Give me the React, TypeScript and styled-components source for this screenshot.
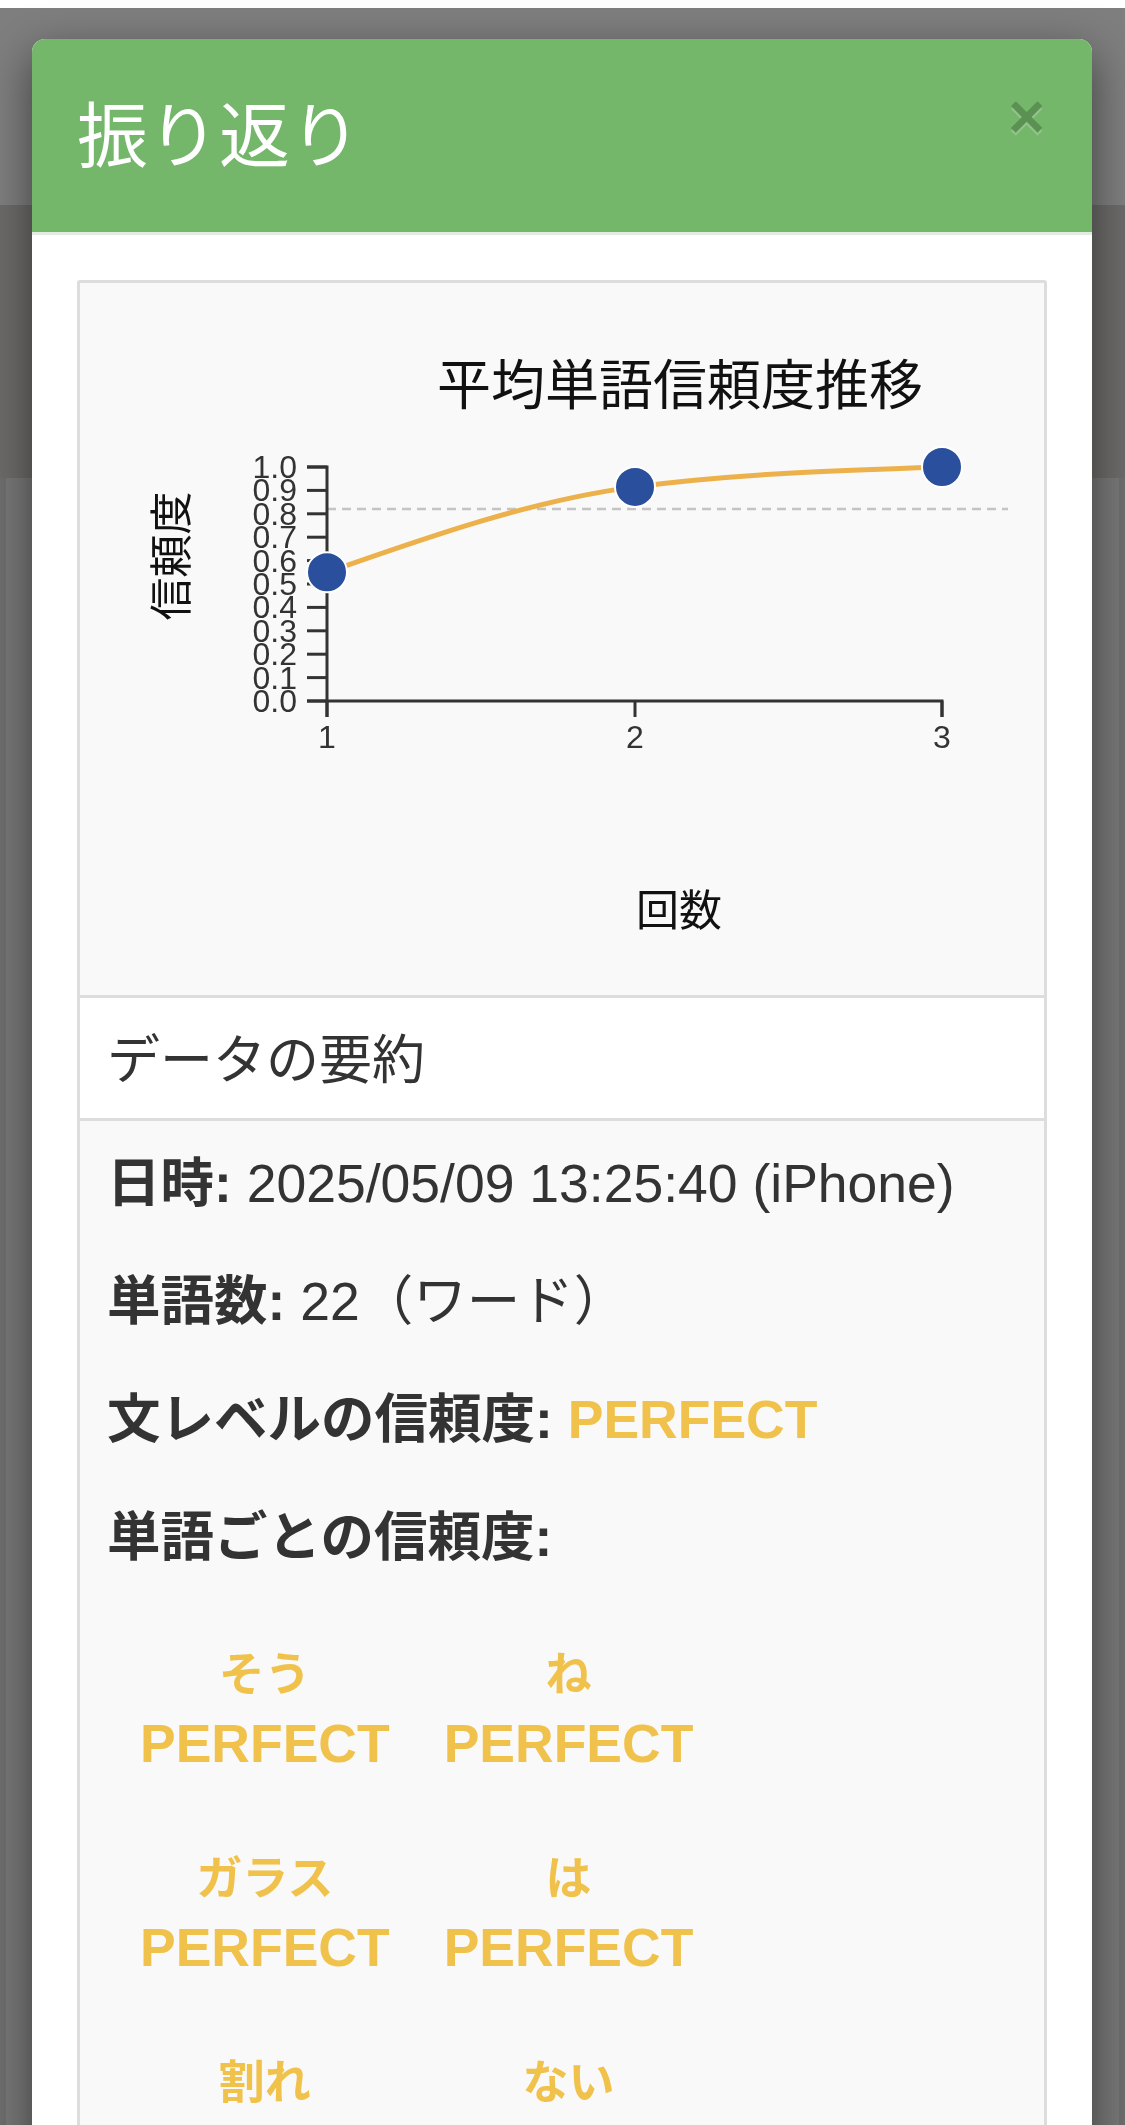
import React from 'react'
import styled, { createGlobalStyle } from 'styled-components'

const GlobalStyle = createGlobalStyle`
  html, body {
    margin: 0;
    padding: 0;
    background: #fff;
    font-family: "Liberation Sans", "Noto Sans CJK JP", sans-serif;
  }
`

// page lying under the dialog backdrop
const Page = styled.div`
  height: 100vh;
  overflow: hidden;
  display: flex;
  flex-direction: column;
  background: #dcdcdc;
`
const StatusGap = styled.div`
  height: 8px;
  background: #fff;
`
const NavBar = styled.div`
  height: 197px;
  background: #fcfcfc;
`
const Band = styled.div`
  height: 273px;
  background: #d8d6d4;
`
const PageContent = styled.div`
  flex: 1;
  padding: 0 6px;
  display: flex;
`
const PageCard = styled.div`
  flex: 1;
  background: #f0f0f0;
`
const Backdrop = styled.div`
  position: fixed;
  top: 8px;
  left: 0;
  right: 0;
  bottom: 0;
  background: rgba(0, 0, 0, 0.5);
`
const ModalLayer = styled.div`
  position: fixed;
  inset: 0;
  overflow: hidden;
  padding: 39px 33px 0 32px;
`
const Dialog = styled.div`
  background: #fff;
  border-radius: 13px 13px 0 0;
  box-shadow: 0 15px 45px rgba(0, 0, 0, 0.5);
  min-height: 100%;
`
const Header = styled.div`
  height: 193px;
  display: flex;
  align-items: center;
  justify-content: space-between;
  padding: 0 47px 0 45px;
  background: #74b66a;
  border-radius: 13px 13px 0 0;
  border-bottom: 3px solid #e4ebe2;
`
const Title = styled.h4`
  margin: 0 0 10px;
  font-family: "Noto Sans CJK JP", sans-serif;
  font-weight: 400;
  font-size: 71px;
  line-height: 1;
  color: #fff;
`
const CloseButton = styled.button`
  align-self: flex-start;
  margin-top: 46px;
  padding: 0;
  border: 0;
  background: none;
  font-family: "Liberation Sans", sans-serif;
  font-size: 63px;
  font-weight: 700;
  line-height: 1;
  color: #000;
  opacity: 0.2;
  text-shadow: 0 3px 0 #fff;
  cursor: pointer;
`
const Body = styled.div`
  padding: 45px;
`
const Panel = styled.div`
  border: 3px solid #ddd;
  border-radius: 3px 3px 0 0;
  background: #f9f9f9;
`
const ChartArea = styled.div`
  height: 712px;
  border-bottom: 3px solid #ddd;
  svg {
    display: block;
  }
`
const ChartTitle = styled.text`
  font-family: "Noto Sans CJK JP", sans-serif;
  font-size: 54px;
  fill: #111;
`
const AxisTitle = styled.text`
  font-family: "Noto Sans CJK JP", sans-serif;
  font-size: 43px;
  fill: #111;
`
const TickText = styled.text`
  font-family: "Liberation Sans", sans-serif;
  font-size: 32px;
  fill: #333;
`
const PanelHeading = styled.div`
  height: 116px;
  display: flex;
  align-items: center;
  padding: 0 0 4px 27px;
  background: #fff;
  border-bottom: 3px solid #ddd;
  font-family: "Noto Sans CJK JP", sans-serif;
  font-size: 53px;
  color: #333;
`
const PanelBody = styled.div`
  padding: 27px 27px 0;
  color: #333;
  font-size: 53.5px;
`
const Row = styled.p`
  margin: 0 0 46px;
  line-height: 72px;
  white-space: nowrap;
`
const Label = styled.strong`
  font-weight: 700;
`
const Level = styled.span`
  font-weight: 700;
  color: #f0c24b;
`
const WordGrid = styled.div`
  display: grid;
  grid-template-columns: repeat(2, max-content);
  margin-left: 6px;
`
const WordItem = styled.div`
  padding: 20px 27px 44px;
  text-align: center;
  color: #f0c24b;
  font-weight: 700;
`
const Word = styled.div`
  font-family: "Noto Sans CJK JP", sans-serif;
  font-size: 46px;
  line-height: 60px;
`
const WordLevel = styled.div`
  margin-top: 8px;
  font-size: 53.5px;
  line-height: 72px;
`

const words = ['そう', 'ね', 'ガラス', 'は', '割れ', 'ない', 'よう', 'に']

// chart geometry, in svg pixels
const X0 = 247
const Y0 = 418
const YSPAN = 234
const xs = [247, 555, 862]
const values = [0.55, 0.915, 1.0]
const yOf = (v: number) => Y0 - v * YSPAN

// same curve as d3.curveMonotoneX
const monotonePath = (pts: [number, number][]) => {
  const n = pts.length
  const s: number[] = []
  for (let i = 0; i < n - 1; i++) {
    s.push((pts[i + 1][1] - pts[i][1]) / (pts[i + 1][0] - pts[i][0]))
  }
  const t: number[] = new Array(n).fill(0)
  for (let i = 1; i < n - 1; i++) {
    const h0 = pts[i][0] - pts[i - 1][0]
    const h1 = pts[i + 1][0] - pts[i][0]
    const p = (s[i - 1] * h1 + s[i] * h0) / (h0 + h1)
    t[i] =
      (Math.sign(s[i - 1]) + Math.sign(s[i])) *
        Math.min(Math.abs(s[i - 1]), Math.abs(s[i]), 0.5 * Math.abs(p)) || 0
  }
  t[0] = (3 * s[0] - t[1]) / 2
  t[n - 1] = (3 * s[n - 2] - t[n - 2]) / 2
  let d = `M${pts[0][0]},${pts[0][1]}`
  for (let i = 0; i < n - 1; i++) {
    const dx = (pts[i + 1][0] - pts[i][0]) / 3
    d += `C${pts[i][0] + dx},${pts[i][1] + dx * t[i]} ${pts[i + 1][0] - dx},${
      pts[i + 1][1] - dx * t[i + 1]
    } ${pts[i + 1][0]},${pts[i + 1][1]}`
  }
  return d
}

const Chart = () => {
  const pts = xs.map((x, i) => [x, yOf(values[i])] as [number, number])
  const yTicks = Array.from({ length: 11 }, (_, i) => i / 10)
  return (
    <svg width="964" height="712" viewBox="0 0 964 712">
      <ChartTitle x="600" y="98" textAnchor="middle" dominantBaseline="central">
        平均単語信頼度推移
      </ChartTitle>
      <AxisTitle
        x="88"
        y="273"
        textAnchor="middle"
        dominantBaseline="central"
        transform="rotate(-90 88 273)"
      >
        信頼度
      </AxisTitle>
      <line
        x1={X0}
        x2="928"
        y1={yOf(0.82)}
        y2={yOf(0.82)}
        stroke="#c4c4c4"
        strokeWidth="2.5"
        strokeDasharray="9 6"
      />
      <g stroke="#333" strokeWidth="3" fill="none">
        <path d={`M${X0 - 20},${yOf(1)}H${X0}V${Y0}H${X0 - 20}`} />
        {yTicks.map((v) => (
          <line key={v} x1={X0 - 20} x2={X0} y1={yOf(v)} y2={yOf(v)} />
        ))}
        <path d={`M${xs[0]},${Y0 + 16}V${Y0}H${xs[2]}V${Y0 + 16}`} />
        {xs.map((x) => (
          <line key={x} x1={x} x2={x} y1={Y0} y2={Y0 + 16} />
        ))}
      </g>
      {yTicks.map((v) => (
        <TickText
          key={v}
          x={X0 - 30}
          y={yOf(v)}
          textAnchor="end"
          dominantBaseline="central"
        >
          {v.toFixed(1)}
        </TickText>
      ))}
      {xs.map((x, i) => (
        <TickText key={x} x={x} y="454" textAnchor="middle" dominantBaseline="central">
          {i + 1}
        </TickText>
      ))}
      <path d={monotonePath(pts)} fill="none" stroke="#ecb14a" strokeWidth="5" />
      {pts.map(([x, y]) => (
        <circle key={x} cx={x} cy={y} r="20" fill="#2a4f9c" stroke="#fff" strokeWidth="2" />
      ))}
      <AxisTitle x="599" y="624" textAnchor="middle" dominantBaseline="central">
        回数
      </AxisTitle>
    </svg>
  )
}

const App = () => (
  <>
    <GlobalStyle />
    <Page>
      <StatusGap />
      <NavBar />
      <Band />
      <PageContent>
        <PageCard />
      </PageContent>
    </Page>
    <Backdrop />
    <ModalLayer>
      <Dialog>
        <Header>
          <Title>振り返り</Title>
          <CloseButton type="button">×</CloseButton>
        </Header>
        <Body>
          <Panel>
            <ChartArea>
              <Chart />
            </ChartArea>
            <PanelHeading>データの要約</PanelHeading>
            <PanelBody>
              <Row>
                <Label>日時:</Label> 2025/05/09 13:25:40 (iPhone)
              </Row>
              <Row>
                <Label>単語数:</Label> 22（ワード）
              </Row>
              <Row>
                <Label>文レベルの信頼度:</Label> <Level>PERFECT</Level>
              </Row>
              <Row>
                <Label>単語ごとの信頼度:</Label>
              </Row>
              <WordGrid>
                {words.map((w, i) => (
                  <WordItem key={i}>
                    <Word>{w}</Word>
                    <WordLevel>PERFECT</WordLevel>
                  </WordItem>
                ))}
              </WordGrid>
            </PanelBody>
          </Panel>
        </Body>
      </Dialog>
    </ModalLayer>
  </>
)

export default App
